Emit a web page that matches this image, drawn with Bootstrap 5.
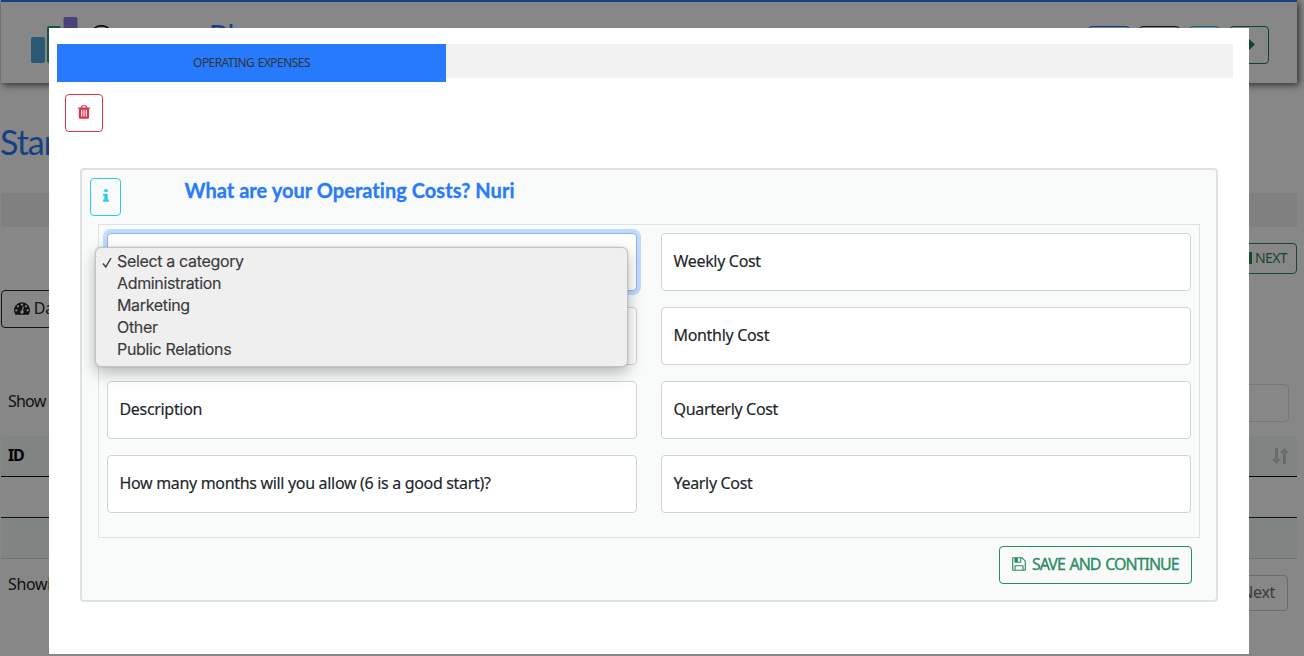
<!DOCTYPE html>
<html lang="en">
<head>
<meta charset="utf-8">
<title>Company Plan - Operating Expenses</title>
<meta name="viewport" content="width=device-width, initial-scale=1">
<link rel="stylesheet" href="https://cdn.jsdelivr.net/npm/bootstrap@5.3.0/dist/css/bootstrap.min.css">
<script src="https://cdn.jsdelivr.net/npm/bootstrap@5.3.0/dist/js/bootstrap.bundle.min.js"></script>
<style>
  :root { --brand: #277afc; --leaf: #2b8a5e; --line: #dee2e6; }
  body { font-family: "Noto Sans", "Open Sans", sans-serif; font-size: 16px; letter-spacing: -.32px; color: #212529; background: #fff; height: 656px; overflow: hidden; }
  .ico { width: 1em; height: 1em; fill: currentColor; vertical-align: -.125em; }
  /* page behind the dialog */
  .page { width: 1296px; margin-left: 1px; }
  .topbar { height: 83px; border-top: 2px solid var(--brand); box-shadow: 2px 2px 7px rgba(0,0,0,.65); padding: 24px 28px 0 30px; }
  .logo { width: 48px; height: 47px; margin-top: -9px; }
  .brand { font: 300 31px/38px Lato, sans-serif; letter-spacing: -1.900px; margin: -10px 0 0 10px; color: #000; }
  .brand b { font-weight: 400; letter-spacing: 0; color: var(--brand); }
  .topbar .btn { height: 38px; }
  .bar-actions { gap: 9px; }
  .page h1 { font: 400 34px/41px Lato, sans-serif; letter-spacing: -1px; color: var(--brand); margin: 38px 0 0 -1px; }
  .strip { height: 34px; background: #f2f2f2; margin-top: 31px; }
  .btn { letter-spacing: inherit; border-radius: 4px; }
  .next-sm { height: 31px; font-size: 14px; letter-spacing: -.6px; border-color: var(--leaf); color: var(--leaf); padding: 3px 9px; margin-top: 16px; }
  .dash { height: 38px; margin-top: 16px; padding: 5px 12px; font-size: 16px; }
  .tools { height: 38px; margin-top: 56px; padding: 0 8px 0 7px; }
  .tools input { width: 180px; border-radius: 4px; }
  .narrow { letter-spacing: -.8px; }
  .grid-table { margin-top: 14px; height: 123px; }
  .grid-table > div { padding: 0 8px 0 7px; }
  .head-row { height: 41px; background: #f1f9f5; border-bottom: 1px solid #000; font-weight: 700; color: #000; }
  .head-row span { padding-bottom: 3px; letter-spacing: -1.200px; }
  .plain-row { height: 41px; border-bottom: 1px solid #222; }
  .stripe-row { height: 41px; background: #f1f9f5; border-bottom: 1px solid #d5d8da; }
  .pager { margin-top: 16px; padding: 0 9px 0 7px; }
  .count { line-height: 18px; }
  .pager .next-lg { height: 36px; border: 1px solid #ccc; border-radius: 4px; color: #6c757d; padding: 4px 12px; }
  .shade { position: fixed; inset: 0; background: rgba(0,0,0,.47); }
  /* dialog */
  .sheet-wrap { position: fixed; inset: 0; padding: 28px 0 0 49px; }
  .sheet { width: 1200px; height: 626px; background: #fff; padding: 16px 16px 0 8px; }
  .steps { height: 34px; background: #f2f2f2; }
  .step-on { width: 389px; height: 38px; background: var(--brand); font-size: 12px; letter-spacing: -.56px; word-spacing: 1px; color: #2f343a; }
  .trash { width: 38px; height: 38px; margin: 16px 0 0 8px; padding: 0 0 2px; font-size: 16px; line-height: 1; }
  .panel { width: 1138px; height: 434px; margin: 36px 0 0 23px; background: #f8fbfa; border: 2px solid var(--line); border-radius: 4px; }
  .panel-top { height: 54px; padding: 8px 0 0 8px; }
  .info-btn { width: 31px; height: 38px; padding: 0 0 2px; color: #26cdec; border-color: #26cdec; font-size: 16px; line-height: 1; }
  .panel-top h2 { font: 900 20px/24px Lato, sans-serif; font-weight: 700; letter-spacing: .04px; font-variant-ligatures: none; color: var(--brand); margin: 0 0 0 63.500px; -webkit-text-stroke: .3px currentColor; }
  .fields { width: 1102px; height: 314px; margin-left: 16px; padding: 8px; border: 1px solid var(--line); display: grid; grid-template-columns: 530px 530px; gap: 16px 24px; align-content: start; -webkit-text-stroke: .15px currentColor; }
  .cell { height: 58px; background: #fff; border: 1px solid #ced4da; border-radius: 4px; padding: 0 11.500px 3px; display: flex; align-items: center; position: relative; }
  .cell.active { border-color: #86b7fe; box-shadow: 0 0 0 4px #c3d9fb; }
  .save { width: 193px; height: 38px; margin: 8px 24px 0 0; padding: 0 1px 2px 0; color: var(--leaf); border-color: var(--leaf); font-size: 16px; letter-spacing: -1px; word-spacing: 1.500px; -webkit-text-stroke: .3px currentColor; }
  .picker { position: absolute; z-index: 5; left: -13px; top: 13px; width: 533px; height: 120px; padding: 2px 0; background: #efefef; border: 1px solid #c2c4c4; border-radius: 6px; box-shadow: 0 6px 16px rgba(0,0,0,.27), 0 0 2px rgba(0,0,0,.2); font: 16px/22px Inter, sans-serif; letter-spacing: -.34px; color: #3b3b3c; }
  .picker li { height: 22px; display: flex; align-items: center; }
  .picker li::before { content: ""; width: 21px; }
  .picker li.picked::before { display: none; }
  .picker .tick { width: 10px; height: 11px; margin: 3px 5px 0 6px; fill: none; stroke: currentColor; stroke-width: 1.4; }
</style>
</head>
<body>
<div class="page">
  <header class="topbar d-flex align-items-start">
    <svg class="logo" viewBox="0 0 48 47"><rect x="0" y="20" width="14" height="26" rx="2" fill="#4fa8de"/><rect x="16" y="9" width="14" height="37" rx="2" fill="#2da578"/><rect x="32.500" y="0" width="14" height="46" rx="2" fill="#8a7be0"/></svg>
    <div class="brand">Company <b>Plan</b></div>
    <div class="d-flex bar-actions ms-auto">
      <span class="btn btn-outline-primary" style="width:42px"></span>
      <span class="btn btn-outline-dark" style="width:41px"></span>
      <span class="btn btn-outline-info" style="width:31px"></span>
      <span class="btn btn-outline-success p-0 d-flex align-items-center justify-content-center" style="width:40px"><svg width="14" height="14" viewBox="0 0 14 14" fill="currentColor"><path d="M0 4h6V0l7 6.500-7 6.500V9H0z"/></svg></span>
    </div>
  </header>
  <h1>Start Up</h1>
  <div class="strip"></div>
  <div class="d-flex justify-content-end"><span class="btn next-sm"><svg class="ico" viewBox="0 0 14 14"><path d="M0 1h14v12H0z"/></svg> NEXT</span></div>
  <span class="btn btn-outline-dark dash"><svg class="ico" viewBox="0 0 1792 1792"><path d="M384 1152q0-53-37.500-90.500t-90.500-37.500-90.500 37.500-37.500 90.500 37.500 90.500 90.500 37.500 90.500-37.500 37.500-90.500zm192-448q0-53-37.500-90.500t-90.500-37.500-90.500 37.500-37.500 90.500 37.500 90.500 90.500 37.500 90.500-37.500 37.500-90.500zm428 481l101-382q6-26-7.500-48.500t-38.500-29.500-48 6.500-30 39.500l-101 382q-60 5-107 43.500t-63 98.500q-20 77 20 146t117 89 146-20 89-117q16-60-6-117t-72-91zm660-33q0-53-37.500-90.500t-90.500-37.500-90.500 37.500-37.500 90.500 37.500 90.500 90.500 37.500 90.500-37.500 37.500-90.500zm-640-640q0-53-37.500-90.500t-90.500-37.500-90.500 37.500-37.500 90.500 37.500 90.500 90.500 37.500 90.500-37.500 37.500-90.500zm448 192q0-53-37.500-90.500t-90.500-37.500-90.500 37.500-37.500 90.500 37.500 90.500 90.500 37.500 90.500-37.500 37.500-90.500zm320 448q0 261-141 483-19 29-54 29h-1402q-35 0-54-29-141-221-141-483 0-182 71-348t191-286 286-191 348-71 348 71 286 191 191 286 71 348z"/></svg> Dashboard</span>
  <div class="tools d-flex align-items-center justify-content-between"><span class="narrow pb-1">Show</span><input class="form-control" aria-label="Search"></div>
  <div class="grid-table">
    <div class="head-row d-flex align-items-center justify-content-between"><span>ID</span>
      <svg width="17" height="18" viewBox="0 0 17 18" fill="none" stroke="#c9cccb" stroke-width="3"><path d="M4.500 1v13M12.500 17V4"/><path d="M0 12h9l-4.500 5zM8 6h9l-4.500-5z" fill="#c9cccb" stroke="none"/></svg></div>
    <div class="plain-row"></div>
    <div class="stripe-row"></div>
  </div>
  <div class="pager d-flex align-items-start justify-content-between"><span class="count">Showing</span><span class="next-lg">Next</span></div>
</div>
<div class="shade"></div>

<div class="sheet-wrap" role="dialog">
  <div class="sheet">
    <div class="steps"><div class="step-on d-flex align-items-center justify-content-center">OPERATING EXPENSES</div></div>
    <button class="btn btn-outline-danger trash" aria-label="Delete"><svg class="ico" viewBox="0 0 1792 1792"><path d="M704 1376v-704q0-14-9-23t-23-9h-64q-14 0-23 9t-9 23v704q0 14 9 23t23 9h64q14 0 23-9t9-23zm256 0v-704q0-14-9-23t-23-9h-64q-14 0-23 9t-9 23v704q0 14 9 23t23 9h64q14 0 23-9t9-23zm256 0v-704q0-14-9-23t-23-9h-64q-14 0-23 9t-9 23v704q0 14 9 23t23 9h64q14 0 23-9t9-23zm-544-992h448l-48-117q-7-9-17-11h-317q-10 2-17 11zm928 32v64q0 14-9 23t-23 9h-96v948q0 83-47 143.500t-113 60.500h-832q-66 0-113-58.500t-47-141.500v-952h-96q-14 0-23-9t-9-23v-64q0-14 9-23t23-9h309l70-167q15-37 54-63t79-26h320q40 0 79 26t54 63l70 167h309q14 0 23 9t9 23z"/></svg></button>
    <section class="panel">
      <div class="panel-top d-flex align-items-start">
        <button class="btn info-btn" aria-label="Info"><svg class="ico" viewBox="0 0 1792 1792"><path d="M1216 1344v128q0 26-19 45t-45 19h-512q-26 0-45-19t-19-45v-128q0-26 19-45t45-19h64v-384h-64q-26 0-45-19t-19-45v-128q0-26 19-45t45-19h384q26 0 45 19t19 45v576h64q26 0 45 19t19 45zm-128-1152v192q0 26-19 45t-45 19h-256q-26 0-45-19t-19-45v-192q0-26 19-45t45-19h256q26 0 45 19t19 45z"/></svg></button>
        <h2>What are your Operating Costs? Nuri</h2>
      </div>
      <div class="fields">
        <div class="cell active">
          <ul class="picker list-unstyled mb-0">
            <li class="picked"><svg class="tick" viewBox="0 0 10 11"><path d="M1 6.500L3.800 10 9 1"/></svg>Select a category</li>
            <li>Administration</li>
            <li>Marketing</li>
            <li>Other</li>
            <li>Public Relations</li>
          </ul>
        </div>
        <div class="cell">Weekly Cost</div>
        <div class="cell"></div>
        <div class="cell">Monthly Cost</div>
        <div class="cell">Description</div>
        <div class="cell">Quarterly Cost</div>
        <div class="cell">How many months will you allow (6 is a good start)?</div>
        <div class="cell">Yearly Cost</div>
      </div>
      <div class="d-flex justify-content-end"><button class="btn save"><svg class="ico" viewBox="0 0 1792 1792"><path d="M512 1536h768v-384h-768v384zm896 0h128v-896q0-14-10-38.500t-20-34.500l-281-281q-10-10-34-20t-39-10v416q0 40-28 68t-68 28h-576q-40 0-68-28t-28-68v-416h-128v1280h128v-416q0-40 28-68t68-28h832q40 0 68 28t28 68v416zm-384-928v-320q0-13-9.500-22.500t-22.500-9.500h-192q-13 0-22.500 9.500t-9.500 22.500v320q0 13 9.500 22.500t22.500 9.500h192q13 0 22.500-9.500t9.500-22.500zm640 32v928q0 40-28 68t-68 28h-1344q-40 0-68-28t-28-68v-1344q0-40 28-68t68-28h928q40 0 88 20t76 48l280 280q28 28 48 76t20 88z"/></svg> SAVE AND CONTINUE</button></div>
    </section>
  </div>
</div>
</body>
</html>
